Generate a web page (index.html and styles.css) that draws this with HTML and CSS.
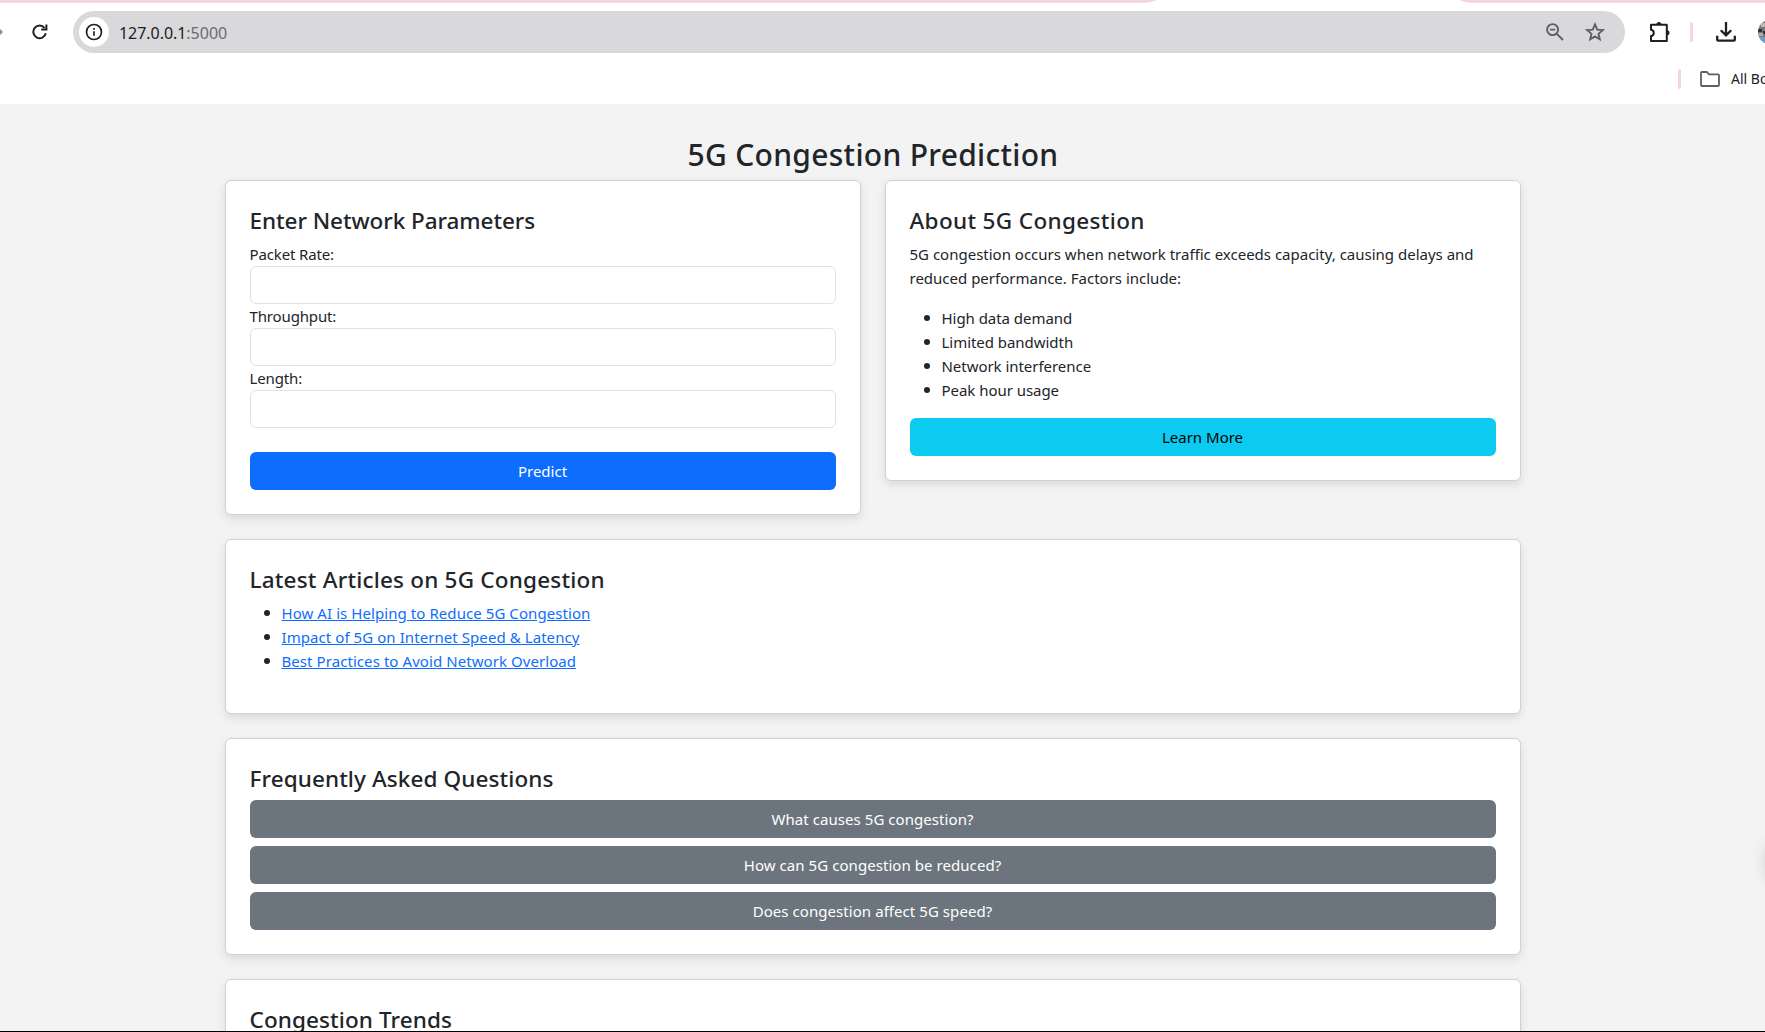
FILE: index.html
```
<!DOCTYPE html>
<html lang="en">
<head>
<meta charset="utf-8">
<title>5G Congestion Prediction</title>
<link rel="stylesheet" href="styles.css">
</head>
<body>
<div class="window">
  <header class="browser">
    <div class="tabstrip"><div class="active-tab"></div></div>
    <div class="toolbar">
      <span class="forward"></span>
      <svg class="reload" width="16" height="16" viewBox="0 0 16 16" fill="none" stroke="#1f2023" stroke-width="2"><path d="M13.8 9.3A6.3 6.3 0 1 1 12.6 4"/><path d="M14.4.4v5.2H9.2"/></svg>
      <div class="omnibox">
        <span class="site-info">
          <svg width="18" height="18" viewBox="0 0 18 18" fill="none" stroke="#1f2023" stroke-width="1.7"><circle cx="9" cy="9" r="7.5"/><path d="M9 8.2v4.6M9 5v1.8"/></svg>
        </span>
        <span class="url"><span class="host">127.0.0.1</span>:5000</span>
        <svg class="zoom-out" width="18" height="18" viewBox="0 0 18 18" fill="none" stroke="#5f6062" stroke-width="1.9"><circle cx="6.6" cy="6.6" r="5.5"/><path d="M10.6 10.6l6.400 6.400M4 6.600h5.200"/></svg>
        <svg class="star" width="20" height="20" viewBox="0 0 20 20" fill="none" stroke="#5f6062" stroke-width="1.900"><path d="M10 2.400l2.200 5.200 5.600.5-4.300 3.700 1.300 5.500L10 14.400l-4.800 2.900 1.300-5.500L2.200 8.100l5.600-.5z"/></svg>
      </div>
      <svg class="extensions" width="22" height="22" viewBox="0 0 22 22"><path d="M2 3.7h15.8v16.2H2V15c3.700-.4 3.700-5.800 0-6.200z" fill="none" stroke="#1f2023" stroke-width="2" stroke-linejoin="round"/><path d="M7.400 3.500a2.500 2.500 0 0 1 5 0zM18 9.300a2.500 2.500 0 0 1 0 5z" fill="#1f2023"/></svg>
      <span class="divider"></span>
      <svg class="download" width="20" height="20" viewBox="0 0 20 20" fill="none" stroke="#1f2023" stroke-width="2.300"><path d="M10 0v13M4.800 8.200l5.200 5.200 5.200-5.200M1.200 13.800v3.900q0 1 1 1h15.600q1 0 1-1v-3.900"/></svg>
      <svg class="avatar" width="24" height="24" viewBox="0 0 24 24"><defs><clipPath id="round"><circle cx="12" cy="12" r="12"/></clipPath></defs><g clip-path="url(#round)"><path fill="#77797c" d="M0 0h24v24H0z"/><path fill="#bdb8ab" d="M3 3h20v4H3z"/><path fill="#2e3440" d="M0 9h4v3H0zM5 11h6v3H5z"/><path fill="#a9a9b0" d="M1 13h4v3H1z"/><path fill="#6d9cc4" d="M2 17h22v7H2z"/></g></svg>
    </div>
    <div class="bookmarks">
      <span class="divider"></span>
      <svg class="folder" width="20" height="16" viewBox="0 0 20 16" fill="none" stroke="#5f6062" stroke-width="1.800" stroke-linejoin="round"><path d="M1 2q0-1 1-1h5l2 2.300h9q1 0 1 1V14q0 1-1 1H2q-1 0-1-1z"/></svg>
      <span class="all-bookmarks">All Bookmarks</span>
    </div>
  </header>

  <main class="page">
    <h1 class="page-title">5G Congestion Prediction</h1>
    <div class="columns">
      <section class="card">
        <h2 class="heading heading-form">Enter Network Parameters</h2>
        <form>
          <label class="label" for="rate">Packet Rate:</label>
          <input class="input" id="rate" type="text">
          <label class="label" for="throughput">Throughput:</label>
          <input class="input" id="throughput" type="text">
          <label class="label" for="length">Length:</label>
          <input class="input" id="length" type="text">
          <button class="btn btn-primary" type="button">Predict</button>
        </form>
      </section>
      <section class="card">
        <h2 class="heading heading-about">About 5G Congestion</h2>
        <p class="text">5G congestion occurs when network traffic exceeds capacity, causing delays and reduced performance. Factors include:</p>
        <ul class="list">
          <li>High data demand</li>
          <li>Limited bandwidth</li>
          <li>Network interference</li>
          <li>Peak hour usage</li>
        </ul>
        <button class="btn btn-info" type="button">Learn More</button>
      </section>
    </div>
    <section class="card">
      <h2 class="heading heading-articles">Latest Articles on 5G Congestion</h2>
      <ul class="list links">
        <li><a href="#">How AI is Helping to Reduce 5G Congestion</a></li>
        <li><a href="#">Impact of 5G on Internet Speed &amp; Latency</a></li>
        <li><a href="#">Best Practices to Avoid Network Overload</a></li>
      </ul>
    </section>
    <section class="card">
      <h2 class="heading">Frequently Asked Questions</h2>
      <div class="faq">
        <button class="btn btn-secondary" type="button">What causes 5G congestion?</button>
        <button class="btn btn-secondary" type="button">How can 5G congestion be reduced?</button>
        <button class="btn btn-secondary" type="button">Does congestion affect 5G speed?</button>
      </div>
    </section>
    <section class="card card-trends">
      <h2 class="heading">Congestion Trends</h2>
    </section>
  </main>
  <div class="side-handle"></div>
</div>
</body>
</html>
```
FILE: styles.css
```
* { box-sizing: border-box; }

body {
  margin: 0;
  font: 15px/24px "Noto Sans", "Open Sans", sans-serif;
  color: #212529;
  background: #f3f3f3;
}

.window {
  position: relative;
  height: 1032px;
  overflow: hidden;
  border-bottom: 1px solid #000;
}

/* Browser chrome */
.browser { height: 104px; background: #fff; overflow: hidden; }

.tabstrip {
  height: 3px;
  padding-left: 1144px;
  background: #f6d5e3;
  overflow: hidden;
}
.active-tab {
  width: 328px;
  height: 3px;
  background: #fff;
  clip-path: polygon(4% 0, 96% 0, 98% 70%, 100% 100%, 0 100%, 2% 70%);
}

.toolbar { display: flex; align-items: center; height: 58px; }
.toolbar > *, .omnibox > *, .bookmarks > * { flex: none; }

.forward {
  width: 3px;
  height: 6px;
  background: #8f9093;
  clip-path: polygon(0 0, 100% 50%, 0 100%);
}
.reload { margin-left: 29px; }

.omnibox {
  display: flex;
  align-items: center;
  width: 1552px;
  height: 42px;
  margin-left: 25px;
  padding-left: 6px;
  border-radius: 21px;
  background: #d9d9db;
}
.site-info {
  display: grid;
  place-items: center;
  width: 30px;
  height: 30px;
  border-radius: 50%;
  background: #fff;
}
.url { margin-left: 10px; padding-top: 1px; width: 1427px; font-size: 16px; color: #6b6c6f; }
.host { color: #1f2023; letter-spacing: -.05px; }
.star { margin-left: 21px; }

.extensions { margin-left: 24px; }
.divider { width: 3px; height: 20px; border-radius: 2px; background: #f6d5e3; }
.toolbar .divider { margin-left: 19px; }
.download { margin-left: 23px; }
.avatar { margin-left: 22px; }

.bookmarks {
  display: flex;
  align-items: center;
  height: 35px;
  padding-left: 1678px;
}
.folder { margin-left: 19px; }
.all-bookmarks { margin-left: 11px; font-size: 14px; white-space: nowrap; color: #1f2023; }

/* Page content */
.page {
  width: 1296px;
  margin-left: 225px;
  padding-top: 30px;
  display: flex;
  flex-direction: column;
}
.page-title {
  margin: 0 0 6px;
  padding-top: 2px;
  font-size: 30px;
  line-height: 38.4px;
  font-weight: 500;
  letter-spacing: .3px;
  text-align: center;
}
.columns {
  display: grid;
  grid-template-columns: 1fr 1fr;
  column-gap: 24px;
  align-items: start;
}
.card {
  margin-bottom: 24px;
  padding: 24px;
  border: 1px solid #d0d1d1;
  border-radius: 6px;
  background: #fff;
  box-shadow: 0 4px 10px rgba(0, 0, 0, .1);
}
.card-trends { height: 300px; }

.heading {
  margin: 0 0 6px -.5px;
  padding-top: 2px;
  font-size: 22.5px;
  line-height: 28.8px;
  font-weight: 500;
  letter-spacing: .1px;
}
.heading-form { letter-spacing: -.06px; }
.heading-about { letter-spacing: .35px; }
.heading-articles { letter-spacing: .2px; }

.text { margin: 0 0 16px -.5px; }

.label { display: block; margin-left: -.5px; letter-spacing: -.14px; }
.input {
  display: block;
  width: 100%;
  height: 38px;
  border: 1px solid #dee2e6;
  border-radius: 6px;
  background: #fff;
}

.list { margin: 0 0 16px; padding-left: 13.500px; list-style: none; letter-spacing: -.04px; }
.list li { display: flex; align-items: center; }
.list li::before {
  content: "";
  width: 6px;
  height: 6px;
  margin-right: 12px;
  border-radius: 50%;
  background: #212529;
}
.links { letter-spacing: .07px; }
.links a { color: #0d6efd; text-underline-offset: 1px; }

.btn {
  display: block;
  width: 100%;
  height: 38px;
  padding: 0 1px 0 0;
  border: 0;
  border-radius: 6px;
  font: inherit;
  color: #fff;
}
.btn-primary { margin-top: 24px; background: #0d6efd; }
.btn-info { background: #0dcaf0; color: #000; }
.btn-secondary { background: #6c757d; letter-spacing: .06px; }

.faq { display: flex; flex-direction: column; gap: 8px; }

/* Off-screen floating handle; only its shadow reaches the viewport */
.side-handle {
  position: absolute;
  right: -42px;
  top: 842px;
  width: 40px;
  height: 40px;
  border-radius: 50%;
  background: #fff;
  box-shadow: 0 0 18px rgba(0, 0, 0, .2);
}
```
